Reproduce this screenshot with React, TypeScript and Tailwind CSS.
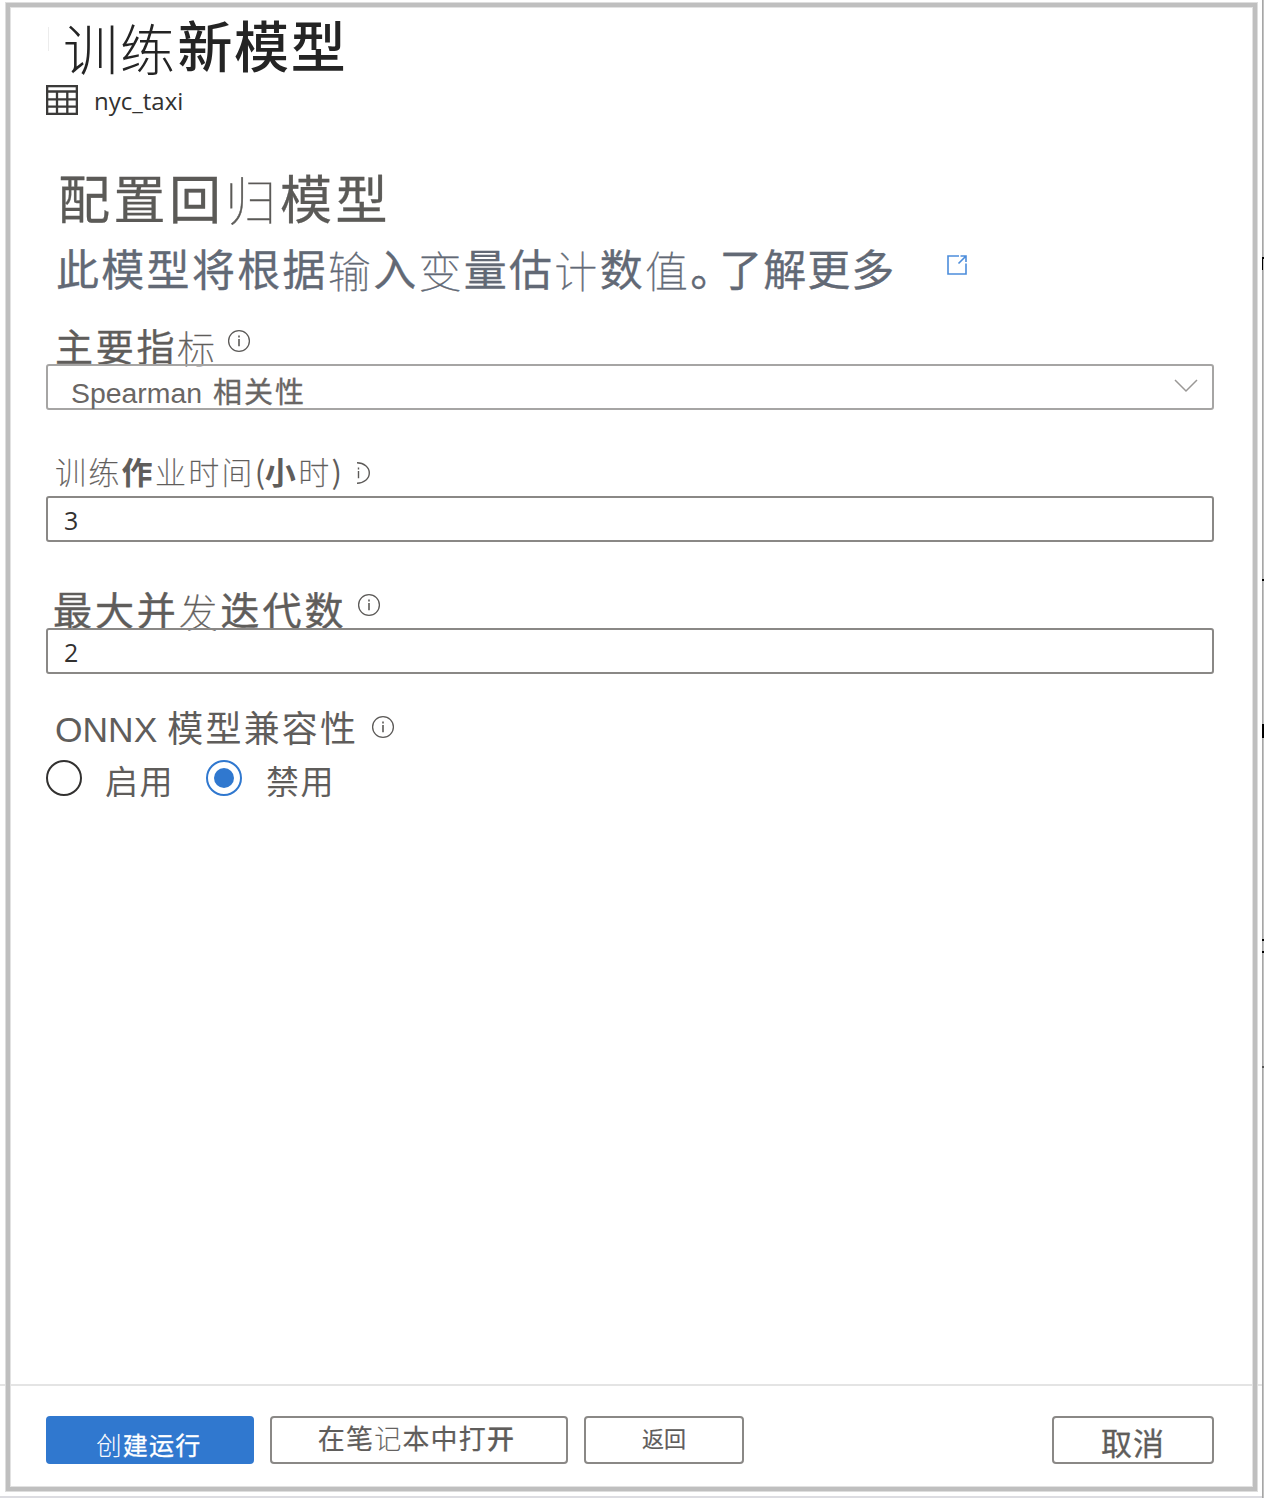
import type { ReactNode } from "react";

const CJK = "font-['Noto_Sans_CJK_SC',sans-serif] whitespace-nowrap";

function Thin({ children, low = false }: { children: ReactNode; low?: boolean }) {
  return <span className={`font-thin [-webkit-text-stroke:0.4px] ${low ? "align-[-2px]" : ""}`}>{children}</span>;
}

function Info({ className = "" }: { className?: string }) {
  return (
    <svg className={`shrink-0 ${className}`} width="24" height="24" viewBox="0 0 24 24" fill="none" stroke="#5c5a58" strokeWidth="1.3">
      <circle cx="12" cy="12" r="10.4" />
      <path d="M12 10v7.2M12 6.6v1.8" strokeWidth="1.6" />
    </svg>
  );
}

function TableIcon() {
  return (
    <svg className="shrink-0" width="32" height="30" viewBox="0 0 32 30" fill="none" stroke="#3b3a39" strokeWidth="2.3">
      <rect x="1.150" y="1.150" width="29.700" height="27.700" />
      <path d="M1 6.500h30M1 14.300h30M1 21.700h30M11 6.500v22M21.300 6.500v22" />
    </svg>
  );
}

function Field({ value }: { value: string }) {
  return (
    <div className="flex h-[46px] w-[1168px] items-center rounded-[3px] border-2 border-[#8a8886] pl-4 font-['Open_Sans',sans-serif] text-[25px] leading-[46px] text-[#323130]">
      <span className="pt-px">{value}</span>
    </div>
  );
}

function EdgeMarks() {
  return (
    <div className="absolute top-0 right-0 h-full w-[2px] bg-gradient-to-r from-[#a6a6a6] from-50% to-[#c3c3c3] to-50%">
      <i className="absolute top-[257px] left-0 h-[13px] w-px bg-black" />
      <i className="absolute top-[257px] left-0 h-[2px] w-[2px] bg-black" />
      <i className="absolute top-[579px] left-0 h-[2px] w-[2px] bg-black" />
      <i className="absolute top-[724px] left-0 h-[14px] w-[2px] bg-black" />
      <i className="absolute top-[939px] left-0 h-[2px] w-[2px] bg-black" />
      <i className="absolute top-[951px] left-0 h-[2px] w-[2px] bg-black" />
      <i className="absolute top-[1066px] left-0 h-[2px] w-[2px] bg-[#555]" />
    </div>
  );
}

export default function App() {
  return (
    <div className="relative flex h-[1498px] w-[1264px] flex-col overflow-hidden bg-white text-[#5f5d5b]">
      <main className="flex h-[1384px] flex-col pl-[46px]">
        <header className="flex h-[170px] flex-col">
          <div className="flex h-[84px] pt-[13px]">
            <i className="mt-[14px] ml-[2px] h-[24px] w-px bg-[#ececec]" />
            <h1 className={`${CJK} ml-[14px] text-[55px] leading-[60px] font-medium tracking-[1.700px] text-[#242424]`}>
              <span className="align-[-3px] font-light">训练</span>
              <span className="pl-px">新模型</span>
            </h1>
          </div>
          <div className="flex h-[32px] items-center">
            <TableIcon />
            <span className="ml-4 pt-[2px] font-['Open_Sans',sans-serif] text-[24px] leading-[32px] text-[#323130]">nyc_taxi</span>
          </div>
        </header>

        <section className="flex h-[158px] flex-col">
          <h2 className={`${CJK} h-[72px] pl-[12px] text-[52px] leading-[53px] font-normal tracking-[3.500px] text-[#5b5a57] [-webkit-text-stroke:0.3px]`}>
            配置回<Thin low>归</Thin>模型
          </h2>
          <div className="flex">
            <p className={`${CJK} pl-[10px] text-[43px] leading-[51px] tracking-[2.300px] text-[#626975] [-webkit-text-stroke:0.3px]`}>
              此模型将根据<Thin low>输</Thin>入<Thin low>变</Thin>量估<Thin low>计</Thin>数<Thin low>值</Thin>
              <span className="tracking-[7.500px] [font-feature-settings:'halt']">。</span>
              <span className="tracking-[1px]">了解更多</span>
            </p>
            <svg className="mt-[12px] ml-[51px] shrink-0" width="22" height="22" viewBox="0 0 22 22" fill="none" stroke="#4c8ddb" strokeWidth="1.6">
              <path d="M13 2H2v18h18V9.500M14.500 2h5.500v6M19.500 2.500L12.500 9.500" />
            </svg>
          </div>
        </section>

        <section className="flex h-[129px] flex-col">
          <div className="flex h-[36px]">
            <label className={`${CJK} pl-[9px] text-[38px] leading-[33px] tracking-[2.700px] [-webkit-text-stroke:0.3px]`}>
              主要指<Thin low>标</Thin>
            </label>
            <Info className="mt-px ml-[9px]" />
          </div>
          <div className="flex h-[46px] w-[1168px] justify-between rounded-[3px] border-2 border-[#a6a5a4] pl-[23px]">
            <div className="flex text-[#696664]">
              <span className="mr-[11px] font-['Liberation_Sans',sans-serif] text-[28.400px] leading-[54px]">Spearman</span>
              <span className={`${CJK} text-[29px] leading-[48px] tracking-[2px] [-webkit-text-stroke:0.3px]`}>相关性</span>
            </div>
            <svg className="mt-[13px] mr-[14px]" width="24" height="14" viewBox="0 0 24 14" fill="none" stroke="#9a9896" strokeWidth="1.5">
              <path d="M1 1l11 11L23 1" />
            </svg>
          </div>
        </section>

        <section className="flex h-[134px] flex-col">
          <div className="flex h-[39px]">
            <label className={`${CJK} pl-[9px] text-[31px] leading-[28px] tracking-[2.300px]`}>
              <Thin>训练</Thin>
              <span className="font-bold">作</span>
              <Thin>业时间</Thin>
              <span className="tracking-[-0.500px]">(</span>
              <span className="font-bold">小</span>
              <Thin>时</Thin>
              <span className="tracking-[0px]">)</span>
            </label>
            <svg className="mt-[4px] ml-[13px]" width="18" height="24" viewBox="0 0 18 24" fill="none" stroke="#5c5a58" strokeWidth="1.4">
              <path d="M2 1.800c7 0 12.300 4.500 12.300 10.200S9 22.200 2 22.200M3.500 10v7.200M3.500 6.600v1.800" />
            </svg>
          </div>
          <Field value="3" />
        </section>

        <section className="flex h-[120px] flex-col">
          <div className="flex h-[37px]">
            <label className={`${CJK} pl-[7px] text-[39px] leading-[35px] tracking-[2.900px] [-webkit-text-stroke:0.4px]`}>
              最大并<Thin low>发</Thin>迭代数
            </label>
            <Info className="mt-[2px] ml-[11px]" />
          </div>
          <Field value="2" />
        </section>

        <section className="flex flex-col">
          <div className="flex h-[49px]">
            <label className="flex pl-[9px]">
              <span className="mr-[10px] font-['Liberation_Sans',sans-serif] text-[35.400px] leading-[38px]">ONNX</span>
              <span className={`${CJK} text-[36px] leading-[31px] tracking-[2.200px]`}>模型兼容性</span>
            </label>
            <Info className="mt-[4px] ml-[13px]" />
          </div>
          <div className="flex h-[36px]">
            <i className="size-[36px] shrink-0 rounded-full border-2 border-[#323130]" />
            <span className={`${CJK} ml-[23px] w-[101px] text-[33px] leading-[40px] tracking-[1.400px]`}>启用</span>
            <i className="flex size-[36px] shrink-0 items-center justify-center rounded-full border-2 border-[#3078cf]">
              <b className="size-[20px] rounded-full bg-[#3078cf]" />
            </i>
            <span className={`${CJK} ml-[24px] text-[33px] leading-[40px] tracking-[1.400px]`}>禁用</span>
          </div>
        </section>
      </main>

      <footer className="flex h-[112px] gap-4 border-t-2 border-[#e4e4e4] pt-[30px] pl-[46px]">
        <button className={`${CJK} h-[48px] w-[208px] rounded-[4px] bg-[#3078cf] pt-[5px] pr-[2px] text-[25px] leading-[46px] tracking-[1.300px] text-white [-webkit-text-stroke:0.3px]`}>
          <Thin>创</Thin>建运行
        </button>
        <button className={`${CJK} h-[48px] w-[298px] rounded-[4px] border-2 border-[#8a8886] pr-[5px] pb-[4px] text-[27px] leading-[40px] tracking-[1.200px] [-webkit-text-stroke:0.2px]`}>
          在笔<Thin>记</Thin>本中打<span className="font-medium">开</span>
        </button>
        <button className={`${CJK} h-[48px] w-[160px] rounded-[4px] border-2 border-[#8a8886] pb-[5px] text-[22px] leading-[39px] [-webkit-text-stroke:0.2px]`}>返回</button>
        <button className={`${CJK} ml-auto mr-[50px] h-[48px] w-[162px] rounded-[4px] border-2 border-[#8a8886] pt-[4px] text-[31px] leading-[40px] tracking-[1px] [-webkit-text-stroke:0.3px]`}>取消</button>
      </footer>

      <div className="absolute bottom-0 left-0 h-[2px] w-full bg-[#dcdce1]" />
      <EdgeMarks />
      <div className="pointer-events-none absolute top-[2px] left-[5px] h-[1490px] w-[1253px] border border-[#dedede]">
        <div className="h-full border-4 border-[#bfbfbf]">
          <div className="h-full border border-[#e2e2e2]" />
        </div>
      </div>
    </div>
  );
}
